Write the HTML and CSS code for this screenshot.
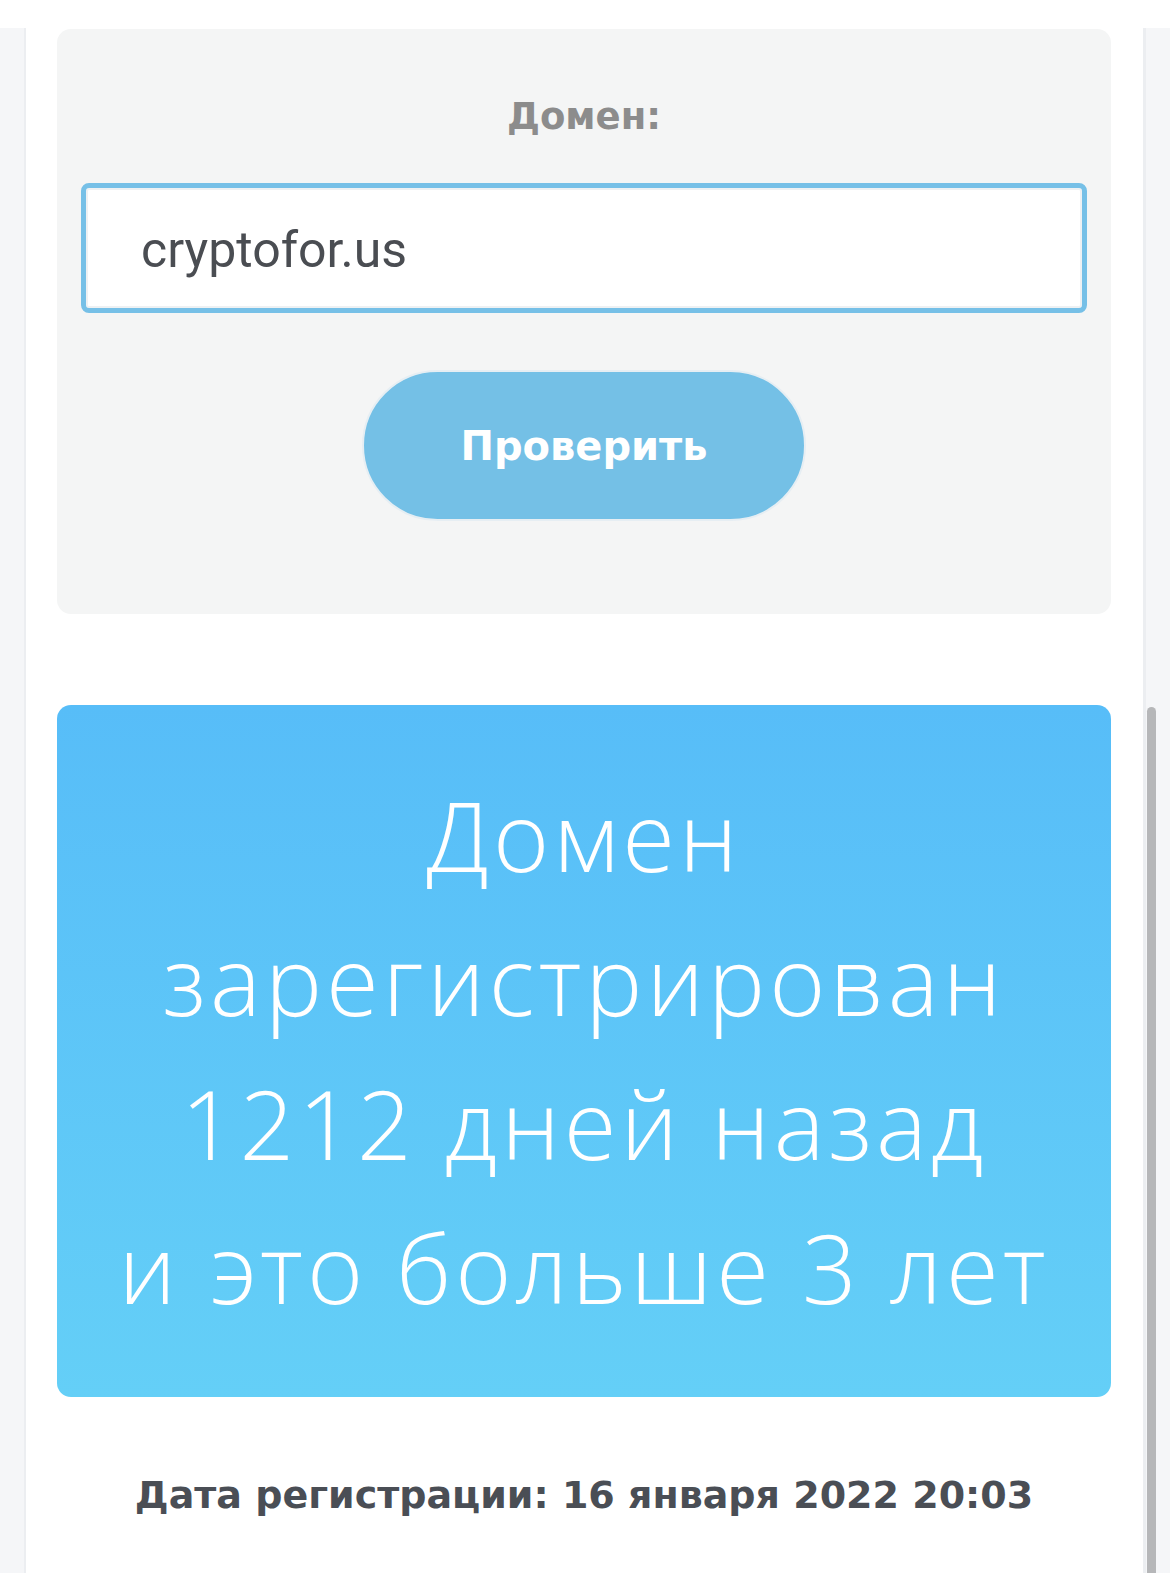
FILE: index.html
```html
<!DOCTYPE html>
<html lang="ru">
<head>
<meta charset="utf-8">
<title>Проверка домена</title>
<link rel="stylesheet" href="styles.css">
</head>
<body>
<div class="topband"></div>
<div class="page">
  <div class="side side-left"></div>
  <main class="main">
    <section class="check-card">
      <div class="label">Домен:</div>
      <div class="input">cryptofor.us</div>
      <div class="btn-row"><button class="btn">Проверить</button></div>
    </section>
    <section class="result">
      <p class="result-text">Домен<br>зарегистрирован<br>1212 дней назад<br>и это больше 3 лет</p>
    </section>
    <p class="date">Дата регистрации: 16 января 2022 20:03</p>
  </main>
  <div class="side side-right"></div>
</div>
<div class="scrollbar"></div>
</body>
</html>
```
FILE: styles.css
```css
html, body {
  margin: 0;
  padding: 0;
}
body {
  background: #f5f6f8;
  height: 1573px;
  overflow: hidden;
  position: relative;
}
.topband {
  height: 28px;
  background: #ffffff;
}
.page {
  display: flex;
  min-height: 1545px;
}
.side {
  background: #f5f6f8;
}
.side-left {
  width: 24px;
  border-right: 2px solid #eceef1;
}
.side-right {
  width: 24px;
  border-left: 3px solid #eceef1;
}
.main {
  flex: 1;
  background: #ffffff;
  padding: 1px 32px 0 31px;
}
.check-card {
  background: #f4f5f5;
  border-radius: 14px;
  padding: 58px 24px 93px;
}
.label {
  text-align: center;
  font-family: "DejaVu Sans", sans-serif;
  font-weight: bold;
  font-size: 37px;
  line-height: 60px;
  color: #8c8c8c;
  margin-bottom: 36px;
}
.input {
  height: 120px;
  border: 5px solid #76c0e7;
  border-radius: 8px;
  background: #ffffff;
  box-shadow: inset 0 0 0 2px #eef1f3;
  box-sizing: content-box;
  padding: 0 0 0 55px;
  font-family: Roboto, sans-serif;
  font-size: 50px;
  line-height: 124px;
  color: #4a4d52;
}
.btn-row {
  display: flex;
  justify-content: center;
  margin-top: 57px;
}
.btn {
  width: 444px;
  height: 151px;
  border-radius: 76px;
  border: 2px solid #e6eef3;
  background: #74c0e6;
  color: #ffffff;
  font-family: "DejaVu Sans", sans-serif;
  font-weight: bold;
  font-size: 40px;
  padding: 0;
}
.result {
  margin-top: 91px;
  border-radius: 14px;
  background: linear-gradient(180deg, #57bdf8 0%, #64cff7 100%);
  padding: 58px 20px;
}
.result-text {
  margin: 0;
  text-align: center;
  font-family: "Open Sans", sans-serif;
  font-weight: 300;
  font-size: 96px;
  line-height: 144px;
  letter-spacing: 4px;
  color: #ffffff;
}
.date {
  margin: 68px 0 0;
  text-align: center;
  font-family: "DejaVu Sans", sans-serif;
  font-weight: bold;
  font-size: 38px;
  line-height: 60px;
  color: #4a4e55;
}
.scrollbar {
  position: absolute;
  left: 1147px;
  top: 707px;
  width: 9px;
  height: 900px;
  border-radius: 5px;
  background: #b6b7b9;
}
```
